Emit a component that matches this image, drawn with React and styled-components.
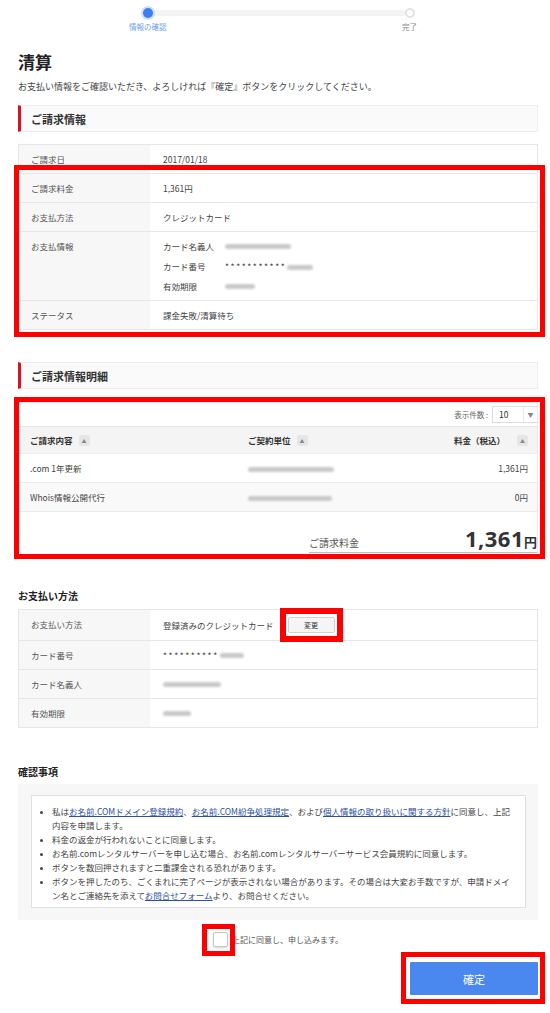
import styled, { createGlobalStyle } from "styled-components";

const GlobalStyle = createGlobalStyle`
  * { box-sizing: border-box; }
  body {
    margin: 0;
    background: #fff;
    font-family: "Noto Sans CJK JP", "Noto Sans", sans-serif;
    color: #444;
  }
`;

const Page = styled.div`
  width: 550px;
  padding: 0 12px 20px 18px;
`;

/* stepper */
const Stepper = styled.div`
  display: grid;
  grid-template-columns: auto 1fr auto;
  align-items: center;
  justify-items: center;
  row-gap: 4px;
  width: 288px;
  margin-left: 111px;
  padding-top: 8px;
`;
const Dot = styled.span`
  position: relative;
  z-index: 1;
  width: 10px;
  height: 10px;
  border-radius: 50%;
  background: ${p => (p.$on ? "#3d7ff0" : "#fff")};
  border: ${p => (p.$on ? "none" : "2px solid #e2e2e2")};
  box-shadow: ${p => (p.$on ? "0 0 0 2px #cfe0fc" : "none")};
`;
const Track = styled.span`
  justify-self: stretch;
  height: 6px;
  background: #f4f4f4;
  margin: 0 -3px 0 -14px;
`;
const StepLabel = styled.span`
  font-size: 7.5px;
  line-height: 10px;
  color: ${p => (p.$on ? "#6f9ff2" : "#888")};
`;

const Title = styled.h1`
  margin: 19px 0 0;
  font-size: 17px;
  line-height: 22px;
  font-weight: bold;
  color: #222;
`;
const Lead = styled.p`
  margin: 8px 0 0;
  font-size: 9px;
  line-height: 12px;
  color: #444;
`;

const SectionHead = styled.div`
  margin-top: ${p => p.$mt}px;
  height: 27px;
  display: flex;
  align-items: center;
  padding-left: 10px;
  background: #fafafa;
  border: 1px solid #eeeeee;
  border-left: 3px solid #d7131f;
  font-size: 11px;
  font-weight: bold;
  color: #333;
`;

/* red annotation frame over content */
const Marked = styled.div`
  position: relative;
  display: ${p => (p.$inline ? "inline-flex" : "block")};
  &::after {
    content: "";
    position: absolute;
    top: ${p => p.$box[0]}px;
    right: ${p => p.$box[1]}px;
    bottom: ${p => p.$box[2]}px;
    left: ${p => p.$box[3]}px;
    border: ${p => p.$w || 5}px solid #ff0000;
    pointer-events: none;
  }
`;

/* key / value tables */
const InfoTable = styled.div`
  margin-top: ${p => p.$mt}px;
  border: 1px solid #e6e6e6;
  border-bottom: none;
`;
const InfoRow = styled.div`
  display: grid;
  grid-template-columns: 131px 1fr;
  border-bottom: 1px solid #e6e6e6;
  font-size: 8.5px;
  line-height: 14px;
`;
const Label = styled.div`
  background: #f7f7f7;
  padding: 7px 12px;
  color: #555;
`;
const Value = styled.div`
  padding: 7px 13px;
  color: #444;
  display: flex;
  align-items: center;
  gap: ${p => p.$gap || 0}px;
`;
const CardGrid = styled.div`
  display: grid;
  grid-template-columns: 62px auto;
  row-gap: 6px;
  align-items: center;
`;
const Blur = styled.span`
  display: inline-block;
  width: ${p => p.$w}px;
  height: 5px;
  border-radius: 3px;
  background: ${p => p.$c || "#c9c9c9"};
  filter: blur(1.3px);
  vertical-align: middle;
`;
const Stars = styled.span`
  letter-spacing: 1.6px;
  margin-right: 1px;
`;
const SmallBtn = styled.button`
  width: 47px;
  height: 16px;
  padding: 0;
  border: 1px solid #d2d2d2;
  border-radius: 2px;
  background: #f5f5f5;
  font-family: inherit;
  font-size: 7px;
  color: #333;
`;

/* detail table */
const Detail = styled.div`
  margin-top: 13px;
  border: 1px solid #e6e6e6;
  border-bottom: none;
`;
const Toolbar = styled.div`
  display: flex;
  justify-content: flex-end;
  align-items: center;
  height: 23px;
  gap: 4px;
  font-size: 7.5px;
  color: #666;
`;
const Select = styled.div`
  width: 45px;
  height: 17px;
  display: flex;
  border: 1px solid #dddddd;
  border-right: none;
  font-size: 8.5px;
  color: #333;
`;
const SelectText = styled.span`
  flex: 1;
  padding-left: 6px;
  line-height: 15px;
`;
const SelectCaret = styled.span`
  width: 14px;
  display: flex;
  align-items: center;
  justify-content: center;
  border-left: 1px solid #e8e8e8;
  font-size: 6px;
  color: #888;
`;
const GridRow = styled.div`
  display: grid;
  grid-template-columns: 218px 1fr auto;
  align-items: center;
  height: ${p => (p.$head ? 28 : 29)}px;
  padding: 0 9px 0 11px;
  background: ${p => (p.$head ? "#f4f4f4" : p.$alt ? "#f9f9f9" : "#fff")};
  border-top: ${p => (p.$head ? "1px solid #e6e6e6" : "none")};
  border-bottom: 1px solid #ececec;
  font-size: 8.5px;
  font-weight: ${p => (p.$head ? "bold" : "normal")};
  color: ${p => (p.$head ? "#333" : "#444")};
`;
const HeadCell = styled.div`
  display: flex;
  align-items: center;
  gap: ${p => p.$gap || 6}px;
  justify-content: ${p => (p.$end ? "flex-end" : "flex-start")};
`;
const Sort = styled.span`
  width: 11px;
  height: 11px;
  border-radius: 2px;
  background: #e6e6e6;
  display: inline-flex;
  align-items: center;
  justify-content: center;
  font-size: 5px;
  font-weight: normal;
  color: #888;
`;
const Right = styled.div`
  text-align: right;
`;
const TotalWrap = styled.div`
  display: flex;
  justify-content: flex-end;
  padding-top: 13px;
`;
const TotalBox = styled.div`
  width: 228px;
  display: flex;
  justify-content: space-between;
  align-items: baseline;
  border-bottom: 1px solid #bdbdbd;
  color: #333;
`;
const TotalLabel = styled.span`
  font-size: 10px;
  color: #555;
`;
const Amount = styled.span`
  font-size: 22px;
  line-height: 27px;
  font-weight: bold;
  letter-spacing: 0.5px;
  font-family: "Noto Sans", "Noto Sans CJK JP", sans-serif;
`;
const Yen = styled.span`
  font-size: 13px;
  font-weight: bold;
  font-family: "Noto Sans CJK JP", sans-serif;
`;

const SubHead = styled.h2`
  margin: ${p => p.$mt}px 0 0;
  font-size: 10px;
  line-height: 14px;
  font-weight: bold;
  color: #222;
`;

/* terms */
const TermsPanel = styled.div`
  margin-top: 5px;
  padding: 11px 12px 12px 13px;
  background: #f7f7f7;
`;
const TermsBox = styled.ul`
  margin: 0;
  padding: 8px 10px 5px 20px;
  background: #fff;
  border: 1px solid #e0e0e0;
  font-size: 8.5px;
  line-height: 14px;
  color: #444;
  list-style: disc;
  li::marker { font-size: 7px; }
`;
const TermLink = styled.a`
  color: #2c4fa3;
  text-decoration: underline;
`;

const AgreeRow = styled.div`
  margin-top: 12px;
  display: flex;
  justify-content: center;
  align-items: center;
  gap: 4px;
  font-size: 8px;
  color: #555;
`;
const CheckBox = styled.span`
  width: 15px;
  height: 15px;
  border: 1px solid #c7c7c7;
  border-radius: 2px;
  background: #fff;
  box-shadow: 0 1px 2px rgba(0, 0, 0, 0.18);
`;

const ButtonRow = styled.div`
  margin-top: 15px;
  display: flex;
  justify-content: flex-end;
`;
const SubmitBtn = styled.button`
  width: 128px;
  height: 33px;
  border: none;
  border-radius: 1px;
  background: #4a87ee;
  color: #fff;
  font-family: inherit;
  font-size: 11px;
`;

export default function App() {
  return (
    <>
      <GlobalStyle />
      <Page>
        <Stepper>
          <Dot $on />
          <Track />
          <Dot />
          <StepLabel $on>情報の確認</StepLabel>
          <span />
          <StepLabel>完了</StepLabel>
        </Stepper>

        <Title>清算</Title>
        <Lead>お支払い情報をご確認いただき、よろしければ『確定』ボタンをクリックしてください。</Lead>

        <SectionHead $mt={12}>ご請求情報</SectionHead>
        <InfoTable $mt={12}>
          <InfoRow>
            <Label>ご請求日</Label>
            <Value>2017/01/18</Value>
          </InfoRow>
          <Marked $box={[-9, -8, -7, -5]}>
            <InfoRow>
              <Label>ご請求料金</Label>
              <Value>1,361円</Value>
            </InfoRow>
            <InfoRow>
              <Label>お支払方法</Label>
              <Value>クレジットカード</Value>
            </InfoRow>
            <InfoRow>
              <Label>お支払情報</Label>
              <Value>
                <CardGrid>
                  <span>カード名義人</span>
                  <Blur $w={66} />
                  <span>カード番号</span>
                  <span>
                    <Stars>***********</Stars>
                    <Blur $w={26} />
                  </span>
                  <span>有効期限</span>
                  <Blur $w={30} />
                </CardGrid>
              </Value>
            </InfoRow>
            <InfoRow>
              <Label>ステータス</Label>
              <Value>課金失敗/清算待ち</Value>
            </InfoRow>
          </Marked>
        </InfoTable>

        <SectionHead $mt={32}>ご請求情報明細</SectionHead>
        <Marked $box={[-5, -7, -6, -4]}>
          <Detail>
            <Toolbar>
              表示件数 :
              <Select>
                <SelectText>10</SelectText>
                <SelectCaret>▼</SelectCaret>
              </Select>
            </Toolbar>
            <GridRow $head>
              <HeadCell>
                ご請求内容<Sort>▲</Sort>
              </HeadCell>
              <HeadCell>
                ご契約単位<Sort>▲</Sort>
              </HeadCell>
              <HeadCell $end $gap={12}>
                料金（税込）<Sort>▲</Sort>
              </HeadCell>
            </GridRow>
            <GridRow>
              <div>.com 1年更新</div>
              <div>
                <Blur $w={86} />
              </div>
              <Right>1,361円</Right>
            </GridRow>
            <GridRow $alt>
              <div>Whois情報公開代行</div>
              <div>
                <Blur $w={84} />
              </div>
              <Right>0円</Right>
            </GridRow>
            <TotalWrap>
              <TotalBox>
                <TotalLabel>ご請求料金</TotalLabel>
                <span>
                  <Amount>1,361</Amount>
                  <Yen>円</Yen>
                </span>
              </TotalBox>
            </TotalWrap>
          </Detail>
        </Marked>

        <SubHead $mt={36}>お支払い方法</SubHead>
        <InfoTable $mt={6}>
          <InfoRow>
            <Label>お支払い方法</Label>
            <Value $gap={14}>
              登録済みのクレジットカード
              <Marked $inline $w={6} $box={[-9, -8, -9, -8]}>
                <SmallBtn>変更</SmallBtn>
              </Marked>
            </Value>
          </InfoRow>
          <InfoRow>
            <Label>カード番号</Label>
            <Value>
              <Stars>**********</Stars>
              <Blur $w={24} />
            </Value>
          </InfoRow>
          <InfoRow>
            <Label>カード名義人</Label>
            <Value>
              <Blur $w={58} />
            </Value>
          </InfoRow>
          <InfoRow>
            <Label>有効期限</Label>
            <Value>
              <Blur $w={28} />
            </Value>
          </InfoRow>
        </InfoTable>

        <SubHead $mt={37}>確認事項</SubHead>
        <TermsPanel>
          <TermsBox>
            <li>
              私は<TermLink>お名前.COMドメイン登録規約</TermLink>、<TermLink>お名前.COM紛争処理規定</TermLink>、および<TermLink>個人情報の取り扱いに関する方針</TermLink>に同意し、上記内容を申請します。
            </li>
            <li>料金の返金が行われないことに同意します。</li>
            <li>お名前.comレンタルサーバーを申し込む場合、お名前.comレンタルサーバーサービス会員規約に同意します。</li>
            <li>ボタンを数回押されますと二重課金される恐れがあります。</li>
            <li>
              ボタンを押したのち、ごくまれに完了ページが表示されない場合があります。その場合は大変お手数ですが、申請ドメイン名とご連絡先を添えて<TermLink>お問合せフォーム</TermLink>より、お問合せください。
            </li>
          </TermsBox>
        </TermsPanel>

        <AgreeRow>
          <Marked $inline $box={[-8, -7, -9, -11]}>
            <CheckBox />
          </Marked>
          上記に同意し、申し込みます。
        </AgreeRow>

        <ButtonRow>
          <Marked $inline $box={[-10, -7, -9, -9]}>
            <SubmitBtn>確定</SubmitBtn>
          </Marked>
        </ButtonRow>
      </Page>
    </>
  );
}
